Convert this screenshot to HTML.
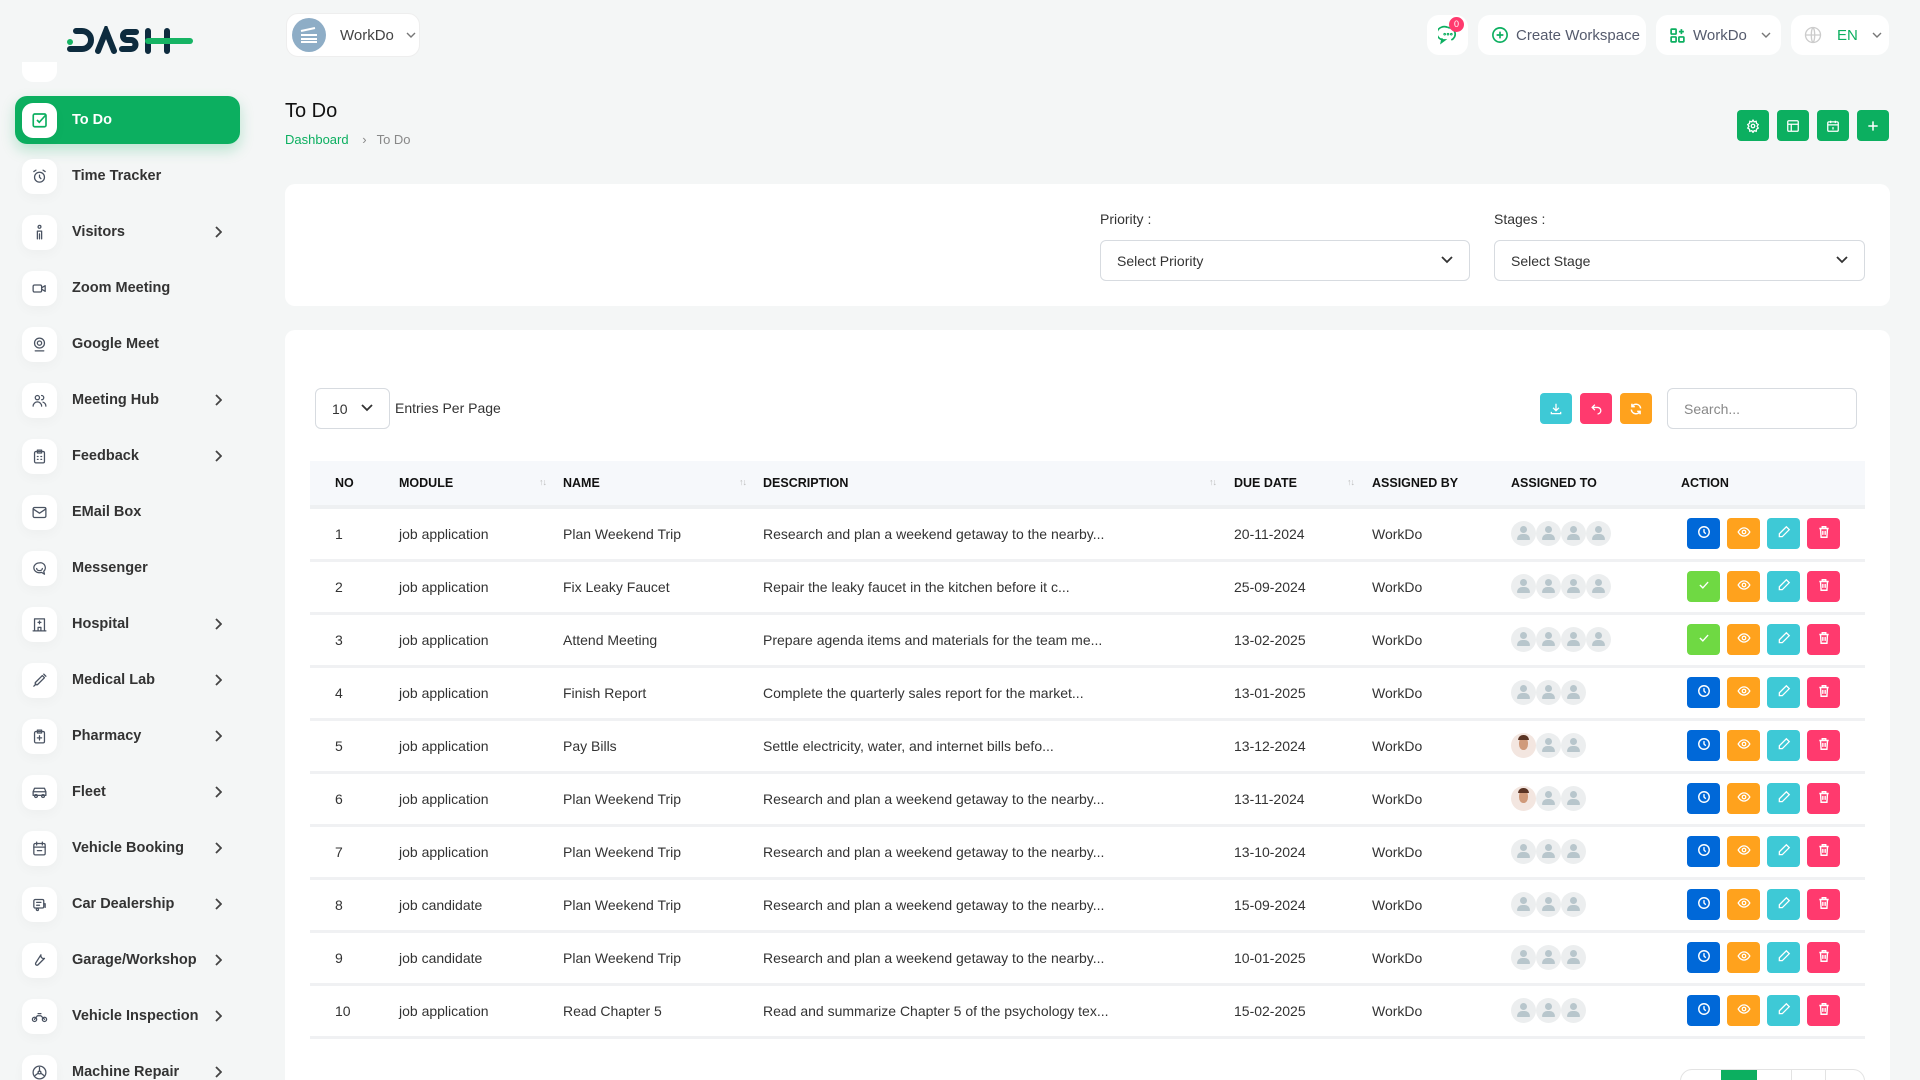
<!DOCTYPE html>
<html><head><meta charset="utf-8">
<style>
*{box-sizing:border-box;margin:0;padding:0}
html{width:1920px;height:1080px;overflow:hidden}
body{width:1920px;height:1080px;overflow:hidden;background:#f4f6f6;font-family:"Liberation Sans",sans-serif;color:#293240;position:relative}
.abs{position:absolute}
.item{position:absolute;left:15px;width:225px;height:48px;border-radius:12px;display:flex;align-items:center;font-size:14.5px;font-weight:bold;color:#333}
.item .ib{width:35px;height:35px;background:#fff;border-radius:11px;margin-left:7px;margin-right:15px;display:flex;align-items:center;justify-content:center;box-shadow:0 4px 12px rgba(0,0,0,.03)}
.item .chev{position:absolute;right:18px;top:18px}
.item.act{background:#0caf60;color:#fff;box-shadow:0 6px 14px rgba(12,175,96,.25)}
.pill{position:absolute;top:15px;height:40px;background:#fff;border-radius:12px;display:flex;align-items:center;font-size:14px;color:#555b6d}
.gbtn{position:absolute;top:110px;width:32px;height:31px;background:#0caf60;border-radius:4px;display:flex;align-items:center;justify-content:center}
.card{position:absolute;background:#fff;border-radius:10px}
.sel{position:absolute;height:41px;border:1px solid #d7dbe0;border-radius:6px;background:#fff;font-size:14px;color:#333;display:flex;align-items:center;padding-left:16px}
.sel svg{position:absolute;right:16px;top:15px}
.sbtn{position:absolute;top:393px;width:32px;height:31px;border-radius:4px;display:flex;align-items:center;justify-content:center}
table{position:absolute;left:310px;top:461px;width:1555px;border-collapse:collapse;font-size:14px}
th{height:46px;background:#f6f8fb;text-align:left;font-size:12.5px;font-weight:bold;color:#111;border-bottom:4px solid #eef0f2;padding:0;position:relative}
td{height:53px;border-bottom:3px solid #f0f1f3;color:#333;padding:0}
.srt{position:absolute;font-size:9px;color:#bbb;top:16px;letter-spacing:-1px}
.av{display:inline-block;width:25px;height:25px;border-radius:50%;background:#eceeef;vertical-align:middle;position:relative;overflow:hidden}
.av:before{content:"";position:absolute;left:9px;top:5px;width:7px;height:7px;border-radius:50%;background:#b8c6cc}
.av:after{content:"";position:absolute;left:6px;top:13px;width:13px;height:6px;border-radius:6px 6px 1px 1px;background:#b8c6cc}
.av.ph{background:#f3e6e0}
.av.ph:before{left:8px;top:4px;width:9px;height:13px;border-radius:45%;background:#d09a7a}
.av.ph:after{left:7px;top:2px;width:11px;height:5px;border-radius:5px 5px 0 0;background:#5a3424}
.ab{display:inline-block;width:33px;height:31px;border-radius:4px;margin-right:7px;vertical-align:middle;text-align:center;padding-top:7px}
</style></head><body>
<!-- logo -->
<svg class="abs" style="left:64px;top:26px" width="130" height="30" viewBox="0 0 130 30">
<g fill="none" stroke="#0d2b3e" stroke-width="6" stroke-linecap="round">
<path d="M12 5h6a9 9 0 0 1 0 18h-12"/>
<path d="M34 25l8-20l8 20"/>
<path d="M72 6h-9a4 4 0 0 0 0 8h4a4.5 4.5 0 0 1 0 9h-9"/>
<path d="M84 5v20M103 5v20"/>
</g>
<path d="M6 16h0" stroke="#16b464" stroke-width="6" stroke-linecap="round"/>
<path d="M84 15h42" stroke="#16b464" stroke-width="6" stroke-linecap="round"/>
</svg>
<div class="abs" style="left:22px;top:62px;width:35px;height:20px;background:#fff;border-radius:0 0 11px 11px"></div>

<div class="item act" style="top:96px"><div class="ib"><svg width="18" height="18" viewBox="0 0 24 24" fill="none" stroke="#0caf60" stroke-width="2.2"><rect x="3" y="4" width="17" height="17" rx="2"/><path d="M8 12l3 3l9-10"/></svg></div>To Do</div>

<div id="items"></div>

<!-- header -->
<div class="pill" style="left:286px;top:13px;width:134px;height:44px;border:1px solid #eee">
<div style="width:34px;height:34px;border-radius:50%;background:#8eadc6;margin-left:5px;display:flex;align-items:center;justify-content:center"><svg width="20" height="16"><g stroke="#fff" stroke-width="2"><path d="M2 4l14-3M2 8h16M2 12h16M2 15h16"/></g></svg></div>
<span style="margin-left:14px;font-size:15px;color:#444">WorkDo</span><svg style="margin-left:12px" width="10" height="6" viewBox="0 0 10 6" fill="none" stroke="#777" stroke-width="1.4"><path d="M1 1l4 4l4-4"/></svg></div>

<div class="pill" style="left:1427px;width:41px;justify-content:center"><svg width="20" height="20" viewBox="0 0 24 24" fill="none" stroke="#0caf60" stroke-width="2"><path d="M12 3a9 8 0 1 0-4 15l-4 3l1-5"/><path d="M12 3a9 8 0 0 1 4 15"/><circle cx="8" cy="11" r=".6"/><circle cx="12" cy="11" r=".6"/><circle cx="16" cy="11" r=".6"/></svg></div>
<div class="abs" style="left:1449px;top:17px;width:15px;height:15px;border-radius:50%;background:#ff3a6e;color:#fff;font-size:9px;text-align:center;line-height:15px">0</div>
<div class="pill" style="left:1478px;width:168px"><svg style="margin-left:13px" width="18" height="18" viewBox="0 0 24 24" fill="none" stroke="#0caf60" stroke-width="2.2"><circle cx="12" cy="12" r="9.5"/><path d="M12 7.5v9M7.5 12h9"/></svg><span style="margin-left:7px;font-size:15px">Create Workspace</span></div>
<div class="pill" style="left:1656px;width:125px"><svg style="margin-left:13px" width="17" height="17" viewBox="0 0 24 24" fill="none" stroke="#0caf60" stroke-width="2.4"><rect x="3" y="3" width="7" height="7" rx="1"/><rect x="3" y="14" width="7" height="7" rx="1"/><rect x="14" y="14" width="7" height="7" rx="1"/><path d="M17.5 3v7M14 6.5h7"/></svg><span style="margin-left:7px;font-size:15px">WorkDo</span><svg style="margin-left:14px" width="10" height="6" viewBox="0 0 10 6" fill="none" stroke="#777" stroke-width="1.4"><path d="M1 1l4 4l4-4"/></svg></div>
<div class="pill" style="left:1791px;width:98px"><svg style="margin-left:13px" width="18" height="18" viewBox="0 0 24 24" fill="none" stroke="#ccc" stroke-width="1.8"><circle cx="12" cy="12" r="10"/><path d="M2 12h20M12 2c3 3 3 17 0 20M12 2c-3 3-3 17 0 20"/></svg><span style="margin-left:15px;font-size:15px;color:#0caf60">EN</span><svg style="margin-left:14px" width="10" height="6" viewBox="0 0 10 6" fill="none" stroke="#777" stroke-width="1.4"><path d="M1 1l4 4l4-4"/></svg></div>

<div class="abs" style="left:285px;top:100px;font-size:20px;color:#111">To Do</div>
<div class="abs" style="left:285px;top:132px;font-size:13px;color:#0caf60">Dashboard <span style="color:#888;margin:0 10px">›</span><span style="color:#888">To Do</span></div>

<div class="gbtn" style="left:1737px"><svg width="14" height="14" viewBox="0 0 24 24" fill="none" stroke="#fff" stroke-width="2.2"><circle cx="12" cy="12" r="3"/><path d="M12 2l2 3l3.5-1l.5 3.5l3 2l-2 3l2 3l-3 2l-.5 3.5l-3.5-1l-2 3l-2-3l-3.5 1l-.5-3.5l-3-2l2-3l-2-3l3-2l.5-3.5l3.5 1z"/></svg></div>
<div class="gbtn" style="left:1777px"><svg width="14" height="14" viewBox="0 0 24 24" fill="none" stroke="#fff" stroke-width="2.2"><rect x="3" y="3" width="18" height="18" rx="2"/><path d="M3 9h18M9 9v12"/></svg></div>
<div class="gbtn" style="left:1817px"><svg width="14" height="14" viewBox="0 0 24 24" fill="none" stroke="#fff" stroke-width="2.2"><rect x="3" y="5" width="18" height="16" rx="2"/><path d="M3 10h18M8 3v4M16 3v4M12 14v4"/></svg></div>
<div class="gbtn" style="left:1857px"><svg width="14" height="14" viewBox="0 0 24 24" stroke="#fff" stroke-width="2.6"><path d="M12 4v16M4 12h16"/></svg></div>

<!-- filter card -->
<div class="card" style="left:285px;top:184px;width:1605px;height:122px"></div>
<div class="abs" style="left:1100px;top:211px;font-size:14px;color:#333">Priority :</div>
<div class="sel" style="left:1100px;top:240px;width:370px">Select Priority<svg width="12" height="8" viewBox="0 0 12 8" fill="none" stroke="#333" stroke-width="1.8"><path d="M1 1l5 5l5-5"/></svg></div>
<div class="abs" style="left:1494px;top:211px;font-size:14px;color:#333">Stages :</div>
<div class="sel" style="left:1494px;top:240px;width:371px">Select Stage<svg width="12" height="8" viewBox="0 0 12 8" fill="none" stroke="#333" stroke-width="1.8"><path d="M1 1l5 5l5-5"/></svg></div>

<!-- table card -->
<div class="card" style="left:285px;top:330px;width:1605px;height:760px"></div>
<div class="sel" style="left:315px;top:388px;width:75px">10<svg width="12" height="8" viewBox="0 0 12 8" fill="none" stroke="#333" stroke-width="1.8"><path d="M1 1l5 5l5-5"/></svg></div>
<div class="abs" style="left:395px;top:400px;font-size:14px;color:#333">Entries Per Page</div>
<div class="sbtn" style="left:1540px;background:#3ec9d6"><svg width="14" height="14" viewBox="0 0 24 24" fill="none" stroke="#fff" stroke-width="2.2"><path d="M12 3v12M7 10l5 5l5-5M4 17v3h16v-3"/></svg></div>
<div class="sbtn" style="left:1580px;background:#ff3a6e"><svg width="13" height="13" viewBox="0 0 24 24" fill="none" stroke="#fff" stroke-width="2.4"><path d="M9 5l-5 5l5 5M4 10h10a6 6 0 0 1 0 12"/></svg></div>
<div class="sbtn" style="left:1620px;background:#ffa21d"><svg width="14" height="14" viewBox="0 0 24 24" fill="none" stroke="#fff" stroke-width="2.6"><path d="M20 11a8 8 0 0 0-15-3M4 13a8 8 0 0 0 15 3M5 3v5h5M19 21v-5h-5"/></svg></div>
<div class="sel" style="left:1667px;top:388px;width:190px;color:#888">Search...</div>

<table>
<thead><tr>
<th style="width:89px;padding-left:25px">NO</th>
<th style="width:164px">MODULE<span class="srt" style="left:140px">↑↓</span></th>
<th style="width:200px">NAME<span class="srt" style="left:176px">↑↓</span></th>
<th style="width:471px">DESCRIPTION<span class="srt" style="left:446px">↑↓</span></th>
<th style="width:138px">DUE DATE<span class="srt" style="left:113px">↑↓</span></th>
<th style="width:139px">ASSIGNED BY</th>
<th style="width:170px">ASSIGNED TO</th>
<th>ACTION</th>
</tr></thead>
<tbody id="tb"></tbody>
</table>

<div class="abs" style="left:1680px;top:1069px;width:185px;height:30px;border:1px solid #e3e3e3;border-radius:12px;background:#fff;overflow:hidden">
<div style="position:absolute;left:40px;top:0;width:36px;height:30px;background:#0caf60"></div>
<div style="position:absolute;left:110px;top:0;width:1px;height:30px;background:#e3e3e3"></div>
<div style="position:absolute;left:144px;top:0;width:1px;height:30px;background:#e3e3e3"></div>
</div>

<script>
var items=[["Time Tracker",0],["Visitors",1],["Zoom Meeting",0],["Google Meet",0],["Meeting Hub",1],["Feedback",1],["EMail Box",0],["Messenger",0],["Hospital",1],["Medical Lab",1],["Pharmacy",1],["Fleet",1],["Vehicle Booking",1],["Car Dealership",1],["Garage/Workshop",1],["Vehicle Inspection",1],["Machine Repair",1]];
var icons=['<circle cx="12" cy="13" r="7"/><path d="M12 10v3l2 2M4 5l3-2M20 5l-3-2"/>','<circle cx="12" cy="4" r="2"/><path d="M9 21v-11h6v11M12 14v7"/>','<rect x="3" y="7" width="12" height="10" rx="2"/><path d="M15 11l5-3v8l-5-3"/>','<circle cx="12" cy="10" r="7"/><circle cx="12" cy="10" r="3"/><path d="M6 21h12"/>','<circle cx="9" cy="8" r="3"/><path d="M3 20a6 6 0 0 1 12 0M15 5a3 3 0 0 1 0 6M21 20a6 6 0 0 0-4-5.6"/>','<rect x="5" y="5" width="14" height="16" rx="2"/><path d="M9 3h6v4H9zM9 12h1M14 12h1M9 16h1M14 16h1"/>','<rect x="3" y="5" width="18" height="14" rx="2"/><path d="M3 7l9 6l9-6"/>','<path d="M12 4a8 7 0 1 0 3 13.5l4 2.5l-1-4a7 7 0 0 0-6-12z"/><path d="M8 12a4 3 0 0 0 8 0"/>','<path d="M5 21V4h14v17M3 21h18M12 7v4M10 9h4M10 21v-5h4v5"/>','<path d="M18 3l3 3M16 5l3 3l-10 10h-3v-3zM4 20l3-3"/>','<rect x="5" y="5" width="14" height="16" rx="2"/><path d="M9 3h6v4H9zM12 11v6M9 14h6"/>','<path d="M3 16v-5l2-5h14l2 5v5zM3 11h18"/><circle cx="7" cy="17" r="2"/><circle cx="17" cy="17" r="2"/>','<rect x="4" y="5" width="16" height="16" rx="2"/><path d="M4 10h16M8 3v4M16 3v4M9 15h6"/>','<rect x="4" y="5" width="14" height="12" rx="2"/><path d="M8 9h6M8 13h4"/><circle cx="9" cy="19" r="1.5"/><path d="M18 11h2v5"/>','<path d="M14 4a4 4 0 0 0 5 5l-9 9a2 2 0 0 1-3-3z"/>','<circle cx="5" cy="16" r="3"/><circle cx="19" cy="16" r="3"/><path d="M5 16l4-5h5l5 5M10 8h4"/>','<circle cx="12" cy="12" r="9"/><circle cx="12" cy="12" r="2"/><path d="M12 10V5M10 13l-4 3M14 13l4 3"/>'];
var h='';
items.forEach(function(it,i){var t=152+56*i;
h+='<div class="item" style="top:'+t+'px"><div class="ib"><svg width="17" height="17" viewBox="0 0 24 24" fill="none" stroke="#4a5362" stroke-width="1.8" stroke-linecap="round" stroke-linejoin="round">'+icons[i]+'</svg></div>'+it[0]+(it[1]?'<svg class="chev" width="8" height="12" viewBox="0 0 8 12" fill="none" stroke="#444" stroke-width="1.8"><path d="M2 1l5 5l-5 5"/></svg>':'')+'</div>';});
document.getElementById('items').innerHTML=h;
var rows=[["job application","Plan Weekend Trip","Research and plan a weekend getaway to the nearby...","20-11-2024",4,0,0],
["job application","Fix Leaky Faucet","Repair the leaky faucet in the kitchen before it c...","25-09-2024",4,0,1],
["job application","Attend Meeting","Prepare agenda items and materials for the team me...","13-02-2025",4,0,1],
["job application","Finish Report","Complete the quarterly sales report for the market...","13-01-2025",3,0,0],
["job application","Pay Bills","Settle electricity, water, and internet bills befo...","13-12-2024",3,1,0],
["job application","Plan Weekend Trip","Research and plan a weekend getaway to the nearby...","13-11-2024",3,1,0],
["job application","Plan Weekend Trip","Research and plan a weekend getaway to the nearby...","13-10-2024",3,0,0],
["job candidate","Plan Weekend Trip","Research and plan a weekend getaway to the nearby...","15-09-2024",3,0,0],
["job candidate","Plan Weekend Trip","Research and plan a weekend getaway to the nearby...","10-01-2025",3,0,0],
["job application","Read Chapter 5","Read and summarize Chapter 5 of the psychology tex...","15-02-2025",3,0,0]];
var clock='<svg width="14" height="14" viewBox="0 0 24 24" fill="none" stroke="#fff" stroke-width="2.4"><circle cx="12" cy="12" r="9"/><path d="M12 7v5l3 3"/></svg>';
var chk='<svg width="14" height="14" viewBox="0 0 24 24" fill="none" stroke="#fff" stroke-width="2.4"><path d="M5 12l5 5l9-10"/></svg>';
var eye='<svg width="16" height="14" viewBox="0 0 24 24" fill="none" stroke="#fff" stroke-width="2.2"><path d="M2 12c3-5 7-7 10-7s7 2 10 7c-3 5-7 7-10 7s-7-2-10-7z"/><circle cx="12" cy="12" r="3"/></svg>';
var pen='<svg width="14" height="14" viewBox="0 0 24 24" fill="none" stroke="#fff" stroke-width="2.2"><path d="M16 3l5 5l-12 12h-5v-5z"/></svg>';
var bin='<svg width="14" height="14" viewBox="0 0 24 24" fill="none" stroke="#fff" stroke-width="2.4"><path d="M4 6h16M9 6V3h6v3M6 6l1 15h10l1-15M10 10v7M14 10v7"/></svg>';
var b='';
rows.forEach(function(r,i){var av='';for(var k=0;k<r[4];k++)av+='<span class="av'+(k==0&&r[5]?' ph':'')+'"></span>';
b+='<tr><td style="padding-left:25px">'+(i+1)+'</td><td>'+r[0]+'</td><td>'+r[1]+'</td><td>'+r[2]+'</td><td>'+r[3]+'</td><td>WorkDo</td><td>'+av+'</td><td style="padding-left:6px"><span class="ab" style="background:'+(r[6]?'#6fd943':'#0068d8')+'">'+(r[6]?chk:clock)+'</span><span class="ab" style="background:#ffa21d">'+eye+'</span><span class="ab" style="background:#3ec9d6">'+pen+'</span><span class="ab" style="background:#ff3a6e">'+bin+'</span></td></tr>';});
document.getElementById('tb').innerHTML=b;
</script>
</body></html>
